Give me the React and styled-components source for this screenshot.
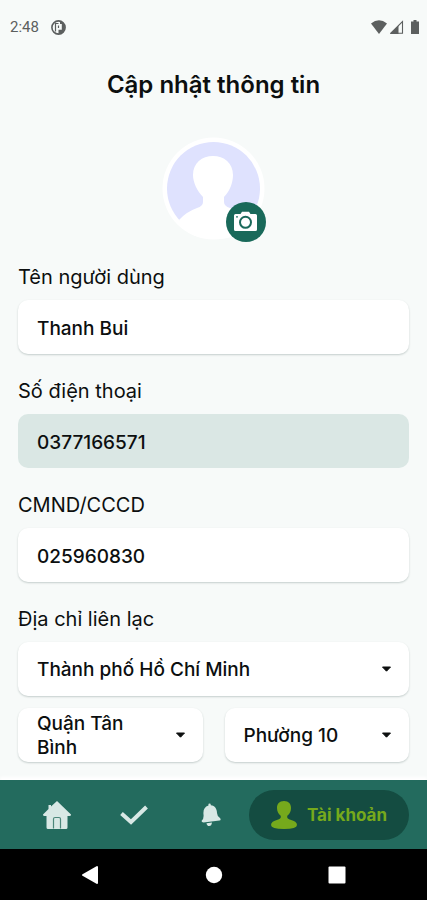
import React, { useState } from 'react'
import styled, { createGlobalStyle } from 'styled-components'

const GlobalStyle = createGlobalStyle`
	* {
		box-sizing: border-box;
	}

	body {
		margin: 0;
		background: #f7faf9;
		color: #0c0f0f;
		font-family: Inter, 'Noto Sans', sans-serif;
	}

	button,
	input,
	select {
		font: inherit;
		color: inherit;
	}
`

const Screen = styled.div`
	display: flex;
	flex-direction: column;
	min-height: 100vh;
`

const StatusBar = styled.header`
	display: flex;
	align-items: center;
	justify-content: space-between;
	height: 54px;
	padding: 0 8px 0 10px;
	color: #5c5f5f;
	font-family: Roboto, sans-serif;
	font-size: 15px;
`

const StatusGroup = styled.div`
	display: flex;
	align-items: center;
	gap: ${({ $gap }) => $gap}px;

	svg {
		display: block;
	}
`

const Content = styled.main`
	flex: 1;
	padding: 16px 18px 18px;
`

const Title = styled.h1`
	margin: 0;
	font-size: 24px;
	font-weight: 600;
	line-height: 30px;
	text-align: center;
`

const Avatar = styled.div`
	position: relative;
	width: 104px;
	height: 104px;
	margin: 36px auto 26px;

	> svg {
		display: block;
	}
`

const CameraButton = styled.button`
	position: absolute;
	right: 0;
	bottom: -2px;
	display: flex;
	align-items: center;
	justify-content: center;
	width: 40px;
	height: 40px;
	padding: 0;
	border: 0;
	border-radius: 50%;
	background: #19695a;
	cursor: pointer;
`

const Form = styled.form`
	display: flex;
	flex-direction: column;
	gap: 26px;
`

const Field = styled.div`
	display: flex;
	flex-direction: column;
	gap: 12px;
`

const Label = styled.label`
	font-size: 20px;
	line-height: 22px;
`

const TextInput = styled.input`
	width: 100%;
	height: 54px;
	padding: 2px 19px 0;
	border: 0;
	border-radius: 10px;
	background: #fff;
	box-shadow: 0 1px 2px rgba(20, 50, 45, 0.22);
	font-size: 19px;
	font-weight: 500;
	outline: none;

	&:read-only {
		background: #dae7e4;
		box-shadow: none;
	}
`

const SelectBox = styled.div`
	position: relative;

	svg {
		position: absolute;
		top: 24px;
		right: 17px;
		pointer-events: none;
	}
`

const Select = styled.select`
	display: block;
	width: 100%;
	height: 54px;
	padding: 2px 48px 0 19px;
	border: 0;
	border-radius: 10px;
	background: #fff;
	box-shadow: 0 1px 2px rgba(20, 50, 45, 0.22);
	font-size: 19px;
	font-weight: 500;
	line-height: 24px;
	white-space: pre-wrap;
	appearance: none;
	outline: none;
`

const SelectRow = styled.div`
	display: grid;
	grid-template-columns: 1fr 1fr;
	gap: 22px;
`

const TabBar = styled.nav`
	display: flex;
	align-items: center;
	height: 69px;
	padding: 0 18px;
	background: #236b5e;
	box-shadow: 0 -3px 3px #fff;
`

const Tab = styled.a`
	display: flex;
	flex: 1;
	align-items: center;
	justify-content: center;
	height: 50px;
	color: #d8e8e5;
`

const ActiveTab = styled(Tab)`
	flex: 0 0 160px;
	gap: 10px;
	border-radius: 25px;
	background: #144c41;
	color: #76a91c;
	font-size: 17px;
	font-weight: 700;
	text-decoration: none;
`

const SystemBar = styled.div`
	display: flex;
	align-items: center;
	height: 51px;
	padding: 0 28px;
	background: #000;
`

const SystemButton = styled.button`
	display: flex;
	flex: 1;
	align-items: center;
	justify-content: center;
	height: 100%;
	padding: 0;
	border: 0;
	background: none;
	color: #fff;
`

const Caret = () => (
	<svg width="11" height="7" viewBox="0 0 11 7" aria-hidden="true">
		<path d="M1.5 1h8L5.5 5.2z" fill="#0c0f0f" stroke="#0c0f0f" strokeLinejoin="round" />
	</svg>
)

const Dropdown = ({ id, label, options }) => (
	<SelectBox>
		<Select id={id} aria-label={label}>
			{options.map((option) => (
				<option key={option}>{option}</option>
			))}
		</Select>
		<Caret />
	</SelectBox>
)

const App = () => {
	const [name, setName] = useState('Thanh Bui')
	const [idNumber, setIdNumber] = useState('025960830')

	return (
		<Screen>
			<GlobalStyle />
			<StatusBar>
				<StatusGroup $gap={12}>
					<span>2:48</span>
					<svg width="15" height="15" viewBox="0 0 15 15" aria-hidden="true">
						<circle cx="7.5" cy="7.5" r="6.6" fill="none" stroke="#5c5f5f" strokeWidth="1.6" />
						<path d="M9 1.2A6.5 6.5 0 0 1 7.5 14V9.8H10.8V4H9z" fill="#5c5f5f" />
						<path d="M4.5 3v8.500M4.500 3.500H7.500M7.500 5.500V8" fill="none" stroke="#5c5f5f" strokeWidth="1.2" />
					</svg>
				</StatusGroup>
				<StatusGroup $gap={3}>
					<svg width="16" height="14" viewBox="0 0 16 14" aria-hidden="true">
						<path d="M0 3.5Q8-3 16 3.5L8 14z" fill="#5c5f5f" />
					</svg>
					<svg width="18" height="14" viewBox="0 0 18 14" aria-hidden="true">
						<path d="M.8 13.2L12.5 1.6v11.6z" fill="none" stroke="#5c5f5f" strokeWidth="1.1" />
						<path d="M0 14L8.5 5.5V14z" fill="#5c5f5f" />
					</svg>
					<svg width="8" height="14" viewBox="0 0 8 14" aria-hidden="true">
						<path d="M2.5 0h3v1.4H8V14H0V1.4h2.5z" fill="#5c5f5f" />
					</svg>
				</StatusGroup>
			</StatusBar>
			<Content>
				<Title>Cập nhật thông tin</Title>
				<Avatar>
					<svg width="104" height="104" viewBox="0 0 104 104" aria-hidden="true">
						<circle cx="51.5" cy="52.5" r="51" fill="#fff" />
						<circle cx="51.5" cy="52.5" r="46.5" fill="#dfe2fe" />
						<path
							d="M17 84Q24 76 35 72Q41 70 41 66V61C35 55 31 46 31 39C31 27 40 20 51 20S71 27 71 39C71 46 68 55 62 61V66Q62 70 68 72L98 84Q80 103 52 103T17 84z"
							fill="#fff"
						/>
					</svg>
					<CameraButton type="button" aria-label="Đổi ảnh">
						<svg width="25" height="22" viewBox="0 0 25 22" aria-hidden="true">
							<path
								d="M2.5 3h5L9 .8h7L17.5 3h5Q24 3 24 4.5v14Q24 20 22.5 20h-20Q1 20 1 18.5v-14Q1 3 2.5 3z"
								fill="#fff"
							/>
							<circle cx="12.5" cy="11.3" r="5.5" fill="none" stroke="#19695a" strokeWidth="2" />
							<circle cx="4" cy="5.8" r=".9" fill="#19695a" />
						</svg>
					</CameraButton>
				</Avatar>
				<Form>
					<Field>
						<Label htmlFor="name">Tên người dùng</Label>
						<TextInput
							id="name"
							type="text"
							value={name}
							onChange={(event) => setName(event.target.value)}
						/>
					</Field>
					<Field>
						<Label htmlFor="phone">Số điện thoại</Label>
						<TextInput id="phone" type="tel" value="0377166571" readOnly />
					</Field>
					<Field>
						<Label htmlFor="idNumber">CMND/CCCD</Label>
						<TextInput
							id="idNumber"
							type="text"
							value={idNumber}
							onChange={(event) => setIdNumber(event.target.value)}
						/>
					</Field>
					<Field>
						<Label htmlFor="city">Địa chỉ liên lạc</Label>
						<Dropdown id="city" options={['Thành phố Hồ Chí Minh']} />
						<SelectRow>
							<Dropdown id="district" label="Quận" options={['Quận Tân Bình']} />
							<Dropdown id="ward" label="Phường" options={['Phường 10']} />
						</SelectRow>
					</Field>
				</Form>
			</Content>
			<TabBar>
				<Tab href="#home" aria-label="Trang chủ">
					<svg width="28" height="28" viewBox="0 0 28 28" aria-hidden="true">
						<path
							d="M14 0L8 5.5V4H5.500V8L0 13.500Q-.2 15 1.500 15H3.500V26.500Q3.500 28 5 28H23Q24.500 28 24.500 26.500V15H26.500Q28.200 15 28 13.500z"
							fill="currentColor"
						/>
						<path
							d="M10.500 27.500V18Q10.500 16.500 12 16.500H16Q17.500 16.500 17.500 18V27.500"
							fill="none"
							stroke="#4c877b"
							strokeWidth="1.2"
						/>
					</svg>
				</Tab>
				<Tab href="#tasks" aria-label="Công việc">
					<svg width="28" height="20" viewBox="0 0 28 20" aria-hidden="true">
						<path d="M1.500 8.500L11 17L26.500 2" fill="none" stroke="currentColor" strokeWidth="4" />
					</svg>
				</Tab>
				<Tab href="#notices" aria-label="Thông báo">
					<svg width="20" height="24" viewBox="0 0 20 24" aria-hidden="true">
						<path
							d="M7.500 2.500Q7 .5 8.500.5T9.800 2.300C14 2.800 16 6 16 10Q16.200 13.500 19 15Q20.500 17 18.500 17.500L2.500 19.500Q0 19.500.8 17.500Q3 15.500 2.500 11.500C2 7 3.500 3.700 7.500 2.500z"
							fill="currentColor"
						/>
						<path d="M5.500 20.200L11 19.500Q10.500 23 8.200 23T5.500 20.200z" fill="currentColor" />
					</svg>
				</Tab>
				<ActiveTab href="#account" aria-current="page">
					<svg width="26" height="28" viewBox="0 0 26 28" aria-hidden="true">
						<path
							d="M13 0C17.800 0 20 3 20 7C20 10.500 18.500 13 16.500 14.500C15.500 17 17 18 19.500 18.700C23.500 19.700 26 21.500 26 24Q26 28 13 28T0 24C0 21.500 2.500 19.700 6.500 18.700C9 18 10.500 17 9.500 14.500C7.500 13 6 10.500 6 7C6 3 8.200 0 13 0z"
							fill="currentColor"
						/>
					</svg>
					<span>Tài khoản</span>
				</ActiveTab>
			</TabBar>
			<SystemBar>
				<SystemButton type="button" aria-label="Quay lại">
					<svg width="18" height="20" viewBox="0 0 18 20" aria-hidden="true">
						<path d="M16 2v16L2 10z" fill="#fff" stroke="#fff" strokeWidth="2" strokeLinejoin="round" />
					</svg>
				</SystemButton>
				<SystemButton type="button" aria-label="Màn hình chính">
					<svg width="18" height="18" viewBox="0 0 18 18" aria-hidden="true">
						<circle cx="9" cy="9" r="8.200" fill="#fff" />
					</svg>
				</SystemButton>
				<SystemButton type="button" aria-label="Ứng dụng gần đây">
					<svg width="18" height="18" viewBox="0 0 18 18" aria-hidden="true">
						<rect x=".5" y=".5" width="17" height="17" rx="1" fill="#fff" />
					</svg>
				</SystemButton>
			</SystemBar>
		</Screen>
	)
}

export default App
